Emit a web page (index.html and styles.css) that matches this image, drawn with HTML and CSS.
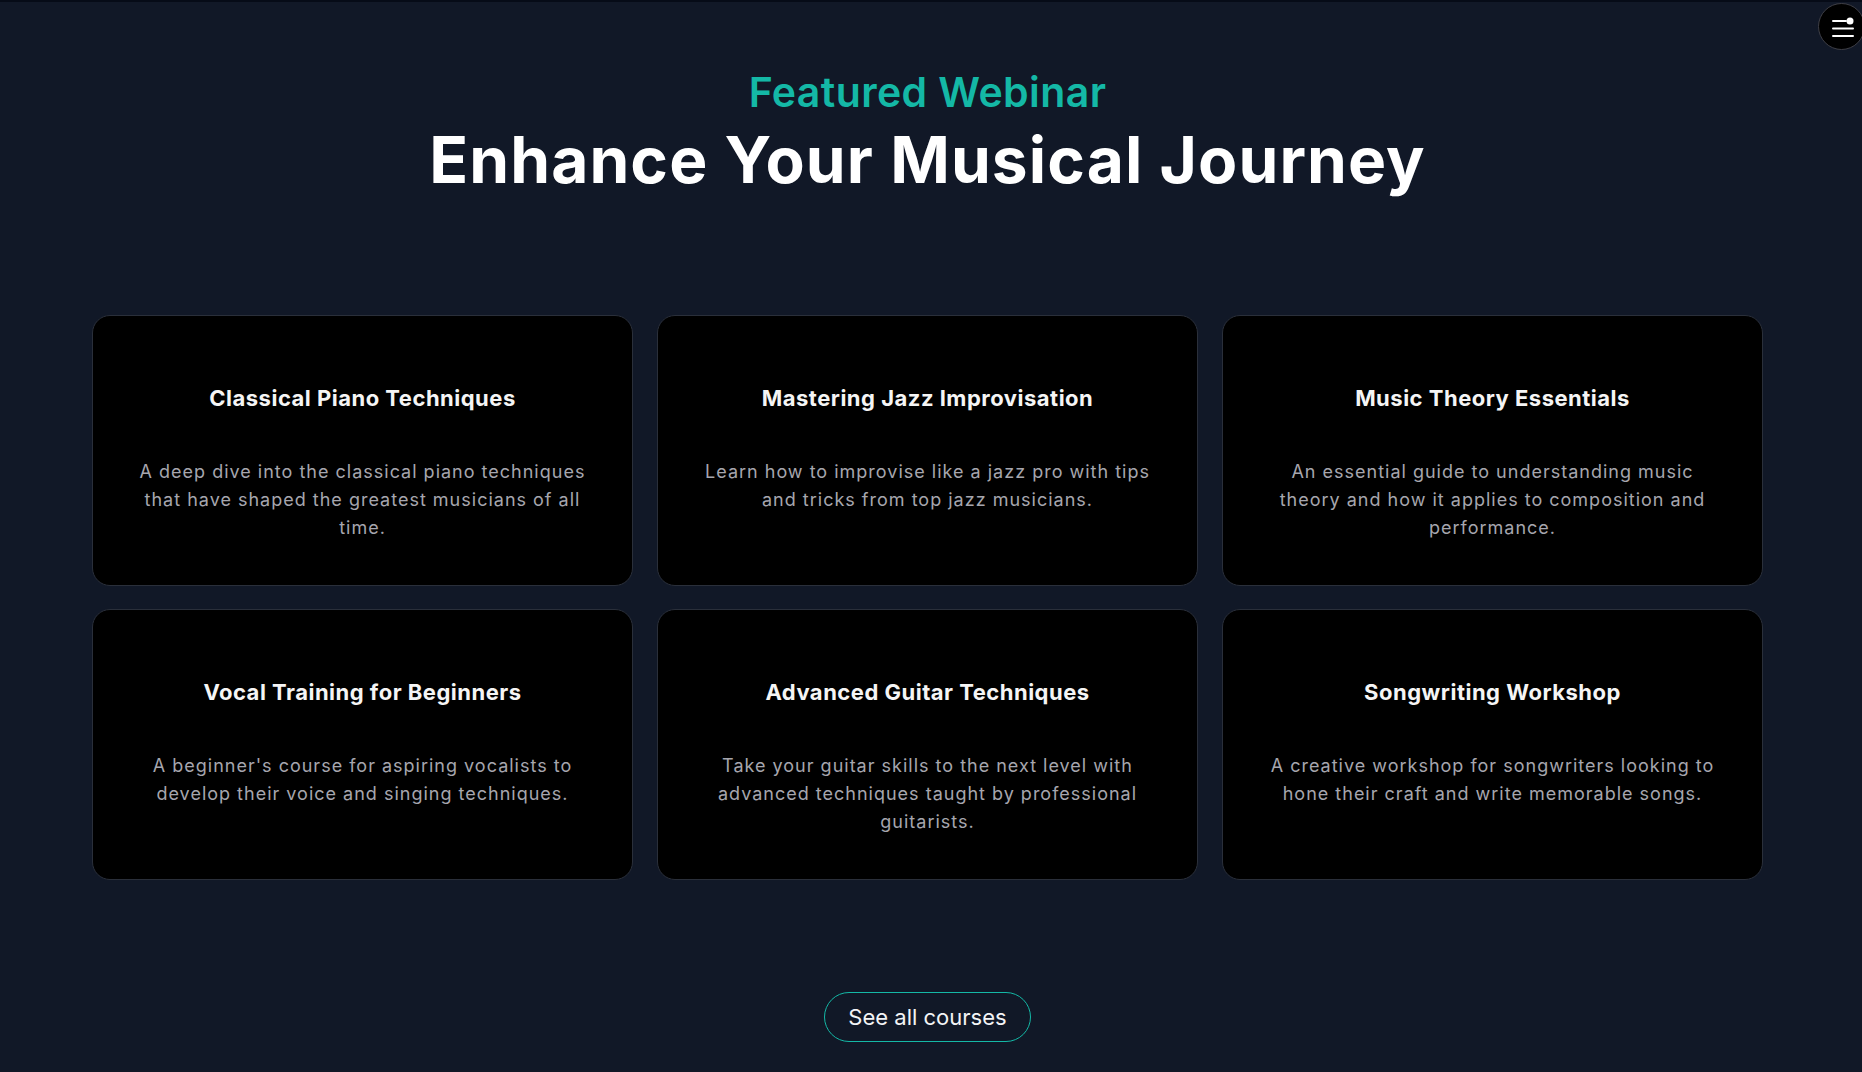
FILE: index.html
```html
<!DOCTYPE html>
<html lang="en">
<head>
<meta charset="utf-8">
<title>Featured Webinar</title>
<link rel="stylesheet" href="styles.css">
</head>
<body>
<div class="topbar"></div>
<main class="page">
  <header class="intro">
    <p class="eyebrow">Featured Webinar</p>
    <h1 class="title">Enhance Your Musical Journey</h1>
  </header>
  <section class="grid">
    <article class="card">
      <h3 class="card-title">Classical Piano Techniques</h3>
      <p class="card-text">A deep dive into the classical piano techniques that have shaped the greatest musicians of all time.</p>
    </article>
    <article class="card">
      <h3 class="card-title">Mastering Jazz Improvisation</h3>
      <p class="card-text">Learn how to improvise like a jazz pro with tips and tricks from top jazz musicians.</p>
    </article>
    <article class="card">
      <h3 class="card-title">Music Theory Essentials</h3>
      <p class="card-text">An essential guide to understanding music theory and how it applies to composition and performance.</p>
    </article>
    <article class="card">
      <h3 class="card-title">Vocal Training for Beginners</h3>
      <p class="card-text">A beginner's course for aspiring vocalists to develop their voice and singing techniques.</p>
    </article>
    <article class="card">
      <h3 class="card-title">Advanced Guitar Techniques</h3>
      <p class="card-text">Take your guitar skills to the next level with advanced techniques taught by professional guitarists.</p>
    </article>
    <article class="card">
      <h3 class="card-title">Songwriting Workshop</h3>
      <p class="card-text">A creative workshop for songwriters looking to hone their craft and write memorable songs.</p>
    </article>
  </section>
  <div class="actions">
    <a class="btn" href="#">See all courses</a>
  </div>
</main>
<button class="menu" aria-label="Menu">
  <svg width="24" height="20" viewBox="0 0 24 20" fill="none">
    <line x1="2" y1="4" x2="15" y2="4" stroke="#fff" stroke-width="2" stroke-linecap="round"/>
    <circle cx="19" cy="4" r="3.5" fill="#fff"/>
    <line x1="2" y1="11.5" x2="22" y2="11.5" stroke="#fff" stroke-width="2" stroke-linecap="round"/>
    <line x1="2" y1="19" x2="22" y2="19" stroke="#fff" stroke-width="2" stroke-linecap="round"/>
  </svg>
</button>
</body>
</html>
```

FILE: styles.css
```css
* { box-sizing: border-box; }
html, body {
  margin: 0;
  padding: 0;
  background: #111827;
  font-family: Inter, "Noto Sans", sans-serif;
  color: #fff;
  overflow: hidden;
}
.topbar {
  height: 2px;
  background: #060b17;
}
.page {
  padding: 0 99px 0 92px;
}
.intro {
  text-align: center;
  padding-top: 66px;
}
.eyebrow {
  margin: 0;
  font-size: 41px;
  line-height: 48px;
  font-weight: 600;
  color: #14b8a6;
  letter-spacing: 0.4px;
}
.title {
  margin: 12px 0 0;
  font-size: 64px;
  line-height: 64px;
  font-weight: 700;
  letter-spacing: 1.1px;
}
.grid {
  margin-top: 123px;
  display: grid;
  grid-template-columns: repeat(3, 1fr);
  gap: 23px 24px;
}
.card {
  background: #000;
  border: 1px solid #2a2f3a;
  border-radius: 18px;
  padding: 44px 40px 43px;
  text-align: center;
}
.card-title {
  margin: 24px 0 0;
  font-size: 22px;
  line-height: 28px;
  font-weight: 700;
  color: #f5f5f5;
  letter-spacing: 0.5px;
}
.card-text {
  margin: 46px 0 0;
  font-size: 18px;
  line-height: 28px;
  color: #a6a6ae;
  letter-spacing: 1px;
}
.actions {
  display: flex;
  justify-content: center;
  padding-top: 112px;
}
.btn {
  display: inline-block;
  padding: 10px 23px;
  border: 1.5px solid #14b8a6;
  border-radius: 999px;
  color: #f3f4f6;
  text-decoration: none;
  font-size: 22px;
  line-height: 28px;
}
.menu {
  position: fixed;
  top: 3px;
  left: 1818px;
  width: 47px;
  height: 47px;
  border-radius: 50%;
  background: #000;
  border: 1.5px solid #3f3f46;
  padding: 0 0 0 12px;
  display: flex;
  align-items: center;
  justify-content: flex-start;
  cursor: pointer;
}
```
